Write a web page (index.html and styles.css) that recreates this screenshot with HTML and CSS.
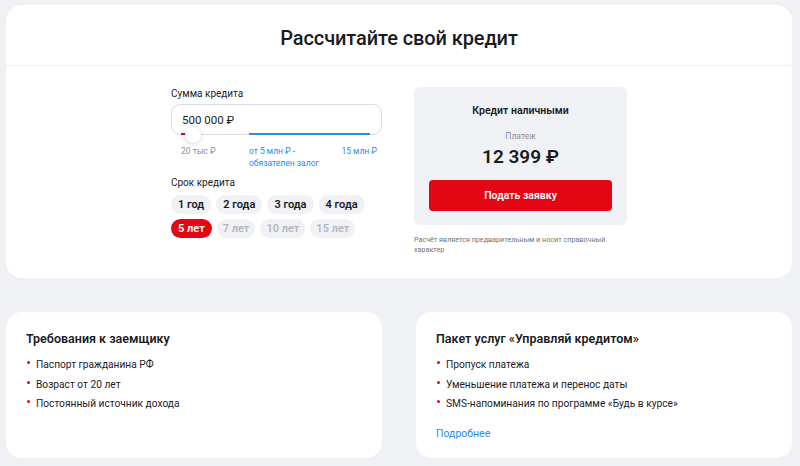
FILE: index.html
```html
<!DOCTYPE html>
<html lang="ru">
<head>
<meta charset="utf-8">
<link rel="stylesheet" href="styles.css">
</head>
<body>
<section class="calc">
  <header class="calc-head"><h1>Рассчитайте свой кредит</h1></header>
  <div class="calc-body">
    <div class="form">
      <div class="label">Сумма кредита</div>
      <div class="amount">
        <span class="amount-value">500 000 ₽</span>
        <span class="track-red"></span>
        <span class="track-blue"></span>
        <span class="knob"></span>
      </div>
      <div class="ticks">
        <span class="tick">20 тыс ₽</span>
        <span class="tick tick-blue">от 5 млн ₽ -<br>обязателен залог</span>
        <span class="tick tick-blue tick-right">15 млн ₽</span>
      </div>
      <div class="label label-term">Срок кредита</div>
      <div class="chips">
        <span class="chip">1 год</span>
        <span class="chip">2 года</span>
        <span class="chip">3 года</span>
        <span class="chip">4 года</span>
      </div>
      <div class="chips">
        <span class="chip chip-active">5 лет</span>
        <span class="chip chip-off">7 лет</span>
        <span class="chip chip-off">10 лет</span>
        <span class="chip chip-off">15 лет</span>
      </div>
    </div>
    <div class="result">
      <div class="result-box">
        <div class="result-title">Кредит наличными</div>
        <div class="result-caption">Платеж</div>
        <div class="result-sum">12 399 ₽</div>
        <button class="apply">Подать заявку</button>
      </div>
      <p class="note">Расчёт является предварительным и носит справочный характер</p>
    </div>
  </div>
</section>
<div class="info">
  <section class="card">
    <h2>Требования к заемщику</h2>
    <ul class="list">
      <li>Паспорт гражданина РФ</li>
      <li>Возраст от 20 лет</li>
      <li>Постоянный источник дохода</li>
    </ul>
  </section>
  <section class="card">
    <h2>Пакет услуг «Управляй кредитом»</h2>
    <ul class="list">
      <li>Пропуск платежа</li>
      <li>Уменьшение платежа и перенос даты</li>
      <li>SMS-напоминания по программе «Будь в курсе»</li>
    </ul>
    <a class="more" href="#">Подробнее</a>
  </section>
</div>
</body>
</html>
```
FILE: styles.css
```css
* { box-sizing: border-box; }
html, body { margin: 0; }
body {
  background: #f0f1f5;
  padding: 5px 8px 8px 6px;
  font-family: Roboto, "Noto Sans", "Liberation Sans", sans-serif;
  color: #1b1b1f;
}
.calc {
  background: #fff;
  border-radius: 16px;
  height: 273px;
}
.calc-head {
  height: 61px;
  border-bottom: 1px solid #eef0f4;
  display: flex;
  align-items: center;
  justify-content: center;
}
.calc-head h1 {
  margin: 0;
  font-size: 20px;
  font-weight: 500;
  letter-spacing: -0.1px;
  padding-top: 5px;
}
.calc-body {
  display: grid;
  grid-template-columns: 211px 213px;
  column-gap: 32px;
  justify-content: center;
  padding-top: 20px;
}
.label {
  font-size: 10px;
  line-height: 14px;
  margin-top: 1px;
  color: #1b1b1f;
}
.amount {
  position: relative;
  margin-top: 3px;
  height: 31px;
  border: 1px solid #d9dce3;
  border-radius: 9px;
  display: flex;
  align-items: center;
  padding-left: 10px;
}
.amount-value { font-size: 11.5px; color: #1b1b1f; }
.track-red {
  position: absolute;
  left: 9px; bottom: -1px;
  width: 8px; height: 2px;
  background: #e30613;
}
.track-blue {
  position: absolute;
  left: 77px; bottom: -1px;
  width: 121px; height: 2px;
  background: #2a8af2;
}
.knob {
  position: absolute;
  left: 13px; bottom: -9px;
  width: 16px; height: 16px;
  border-radius: 50%;
  background: #fff;
  box-shadow: 0 1px 4px rgba(0,0,0,0.18);
}
.ticks {
  display: flex;
  padding: 10px 5px 0 10px;
  font-size: 8.5px;
  line-height: 12px;
  color: #8a8e97;
}
.tick:first-child { width: 68px; }
.tick-blue { color: #2a8af2; }
.tick-right { margin-left: auto; }
.label-term { margin-top: 7px; }
.chips {
  display: flex;
  gap: 5px;
  margin-top: 5px;
}
.chips + .chips { margin-top: 5px; }
.chip {
  height: 19px;
  line-height: 19px;
  padding: 0 7px;
  border-radius: 10px;
  background: #f0f1f5;
  font-size: 11px;
  font-weight: 600;
  color: #1b1b1f;
}
.chip-active { background: #e30613; color: #fff; }
.chip-off { color: #b3b6bd; padding: 0 6px; }
.result-box {
  margin-top: 1px;
  background: #f0f1f5;
  border-radius: 6px;
  height: 138px;
  padding: 17px 15px 0;
  display: flex;
  flex-direction: column;
  align-items: center;
}
.result-title {
  font-size: 10.5px;
  font-weight: 600;
  line-height: 14px;
}
.result-caption {
  margin-top: 12px;
  font-size: 8.5px;
  line-height: 12px;
  color: #8a8e97;
}
.result-sum {
  margin-top: 4px;
  font-size: 19px;
  font-weight: 600;
  line-height: 22px;
}
.apply {
  margin-top: 12px;
  width: 100%;
  height: 31px;
  border: 0;
  border-radius: 4px;
  background: #e30613;
  color: #fff;
  font-family: inherit;
  font-size: 10.5px;
  font-weight: 600;
}
.note {
  margin: 10px 0 0;
  font-size: 7.2px;
  line-height: 10px;
  color: #6f737b;
}
.info {
  display: grid;
  grid-template-columns: 376px 376px;
  column-gap: 34px;
  margin-top: 34px;
}
.card {
  background: #fff;
  border-radius: 16px;
  height: 146px;
  padding: 18px 20px 0;
}
.card h2 {
  margin: 0;
  font-size: 12.5px;
  font-weight: 600;
  line-height: 17px;
}
.list {
  list-style: none;
  margin: 8px 0 0;
  padding: 0;
}
.list li {
  position: relative;
  padding-left: 10px;
  font-size: 10.2px;
  line-height: 19.5px;
  color: #1b1b1f;
}
.list li::before {
  content: "";
  position: absolute;
  left: 1px; top: 6px;
  width: 3px; height: 3px;
  border-radius: 50%;
  background: #e30613;
}
.more {
  display: inline-block;
  margin-top: 13px;
  font-size: 10.5px;
  color: #2a8af2;
  text-decoration: none;
}
```
